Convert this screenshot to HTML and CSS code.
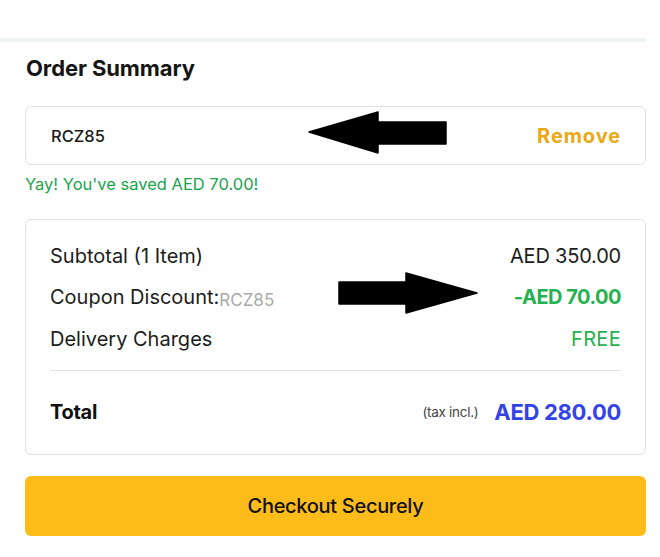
FILE: index.html
```html
<!DOCTYPE html>
<html>
<head>
<meta charset="utf-8">
<link rel="stylesheet" href="styles.css">
</head>
<body>
<div class="page">
  <div class="top-space"></div>
  <div class="rule"></div>
  <div class="content">
    <h2 class="title">Order Summary</h2>
    <div class="coupon-box">
      <span class="coupon-code">RCZ85</span>
      <span class="remove">Remove</span>
    </div>
    <div class="saved">Yay! You've saved AED 70.00!</div>
    <div class="summary">
      <div class="row">
        <span class="label">Subtotal (1 Item)</span>
        <span class="value">AED 350.00</span>
      </div>
      <div class="row">
        <span class="label">Coupon Discount:<span class="code-tag">RCZ85</span></span>
        <span class="value discount">-AED 70.00</span>
      </div>
      <div class="row">
        <span class="label">Delivery Charges</span>
        <span class="value free">FREE</span>
      </div>
      <div class="divider"></div>
      <div class="row total-row">
        <span class="total-label">Total</span>
        <span class="total-right"><span class="tax">(tax incl.)</span><span class="total-value">AED 280.00</span></span>
      </div>
    </div>
    <button class="checkout">Checkout Securely</button>
  </div>
  <svg class="annotations" width="660" height="557" viewBox="0 0 660 557">
    <polygon points="309,132 378,112 378,122 446,122 446,144 378,144 378,153" />
    <polygon points="339,282 406,282 406,273 477,293 406,313 406,304 339,304" />
  </svg>
</div>
</body>
</html>
```
FILE: styles.css
```css
* { box-sizing: border-box; }
html, body { margin: 0; padding: 0; background: #fff; }
body { font-family: Inter, "Noto Sans", sans-serif; color: #111; }
.page { position: relative; width: 660px; height: 557px; overflow: hidden; }
.top-space { height: 38px; }
.rule { width: 646px; height: 4px; background: #edf2f3; }
.content { width: 646px; padding-left: 25px; }
.title { margin: 13px 0 0 1px; font-size: 22px; font-weight: 700; letter-spacing: -0.1px; line-height: 26px; color: #151515; }
.coupon-box { margin-top: 25px; height: 59px; border: 1px solid #e1e1e1; border-radius: 6px; display: flex; align-items: center; justify-content: space-between; padding: 0 24px 0 25px; }
.coupon-code { font-size: 16.5px; font-weight: 500; color: #1a1a1a; }
.remove { font-size: 20px; font-weight: 700; color: #eaa815; letter-spacing: 0.9px; }
.saved { margin-top: 9px; font-size: 16.5px; color: #1ba34c; line-height: 20px; letter-spacing: 0; }
.summary { margin-top: 25px; border: 1px solid #e1e1e1; border-radius: 6px; padding: 15px 24px 0 24px; height: 236px; }
.row { display: flex; justify-content: space-between; align-items: center; height: 41.5px; }
.label { font-size: 20px; color: #1c1c1c; letter-spacing: 0; }
.code-tag { font-size: 17px; color: #a9a9a9; letter-spacing: 0; position: relative; top: 2px; }
.value { font-size: 20px; color: #1c1c1c; letter-spacing: -0.2px; }
.discount { color: #22b24f; font-weight: 700; letter-spacing: -0.5px; }
.free { color: #22b24f; letter-spacing: 0.3px; }
.divider { height: 1px; background: #e3e3e3; margin-top: 10px; }
.total-row { height: 82px; }
.total-label { font-size: 20px; font-weight: 700; letter-spacing: -0.3px; }
.total-right { display: flex; align-items: center; gap: 16px; }
.tax { font-size: 13.5px; color: #444; letter-spacing: -0.3px; }
.total-value { font-size: 22px; font-weight: 700; color: #3443e6; letter-spacing: -0.3px; }
.checkout { display: block; width: 100%; margin-top: 21px; height: 60px; border: none; border-radius: 6px; background: #fdbc1a; font-family: Inter, "Noto Sans", sans-serif; font-size: 20px; font-weight: 500; color: #111; letter-spacing: -0.3px; }
.annotations { position: absolute; left: 0; top: 0; }
.annotations polygon { fill: #000; stroke: #000; stroke-width: 1.5; stroke-linejoin: round; }
```
